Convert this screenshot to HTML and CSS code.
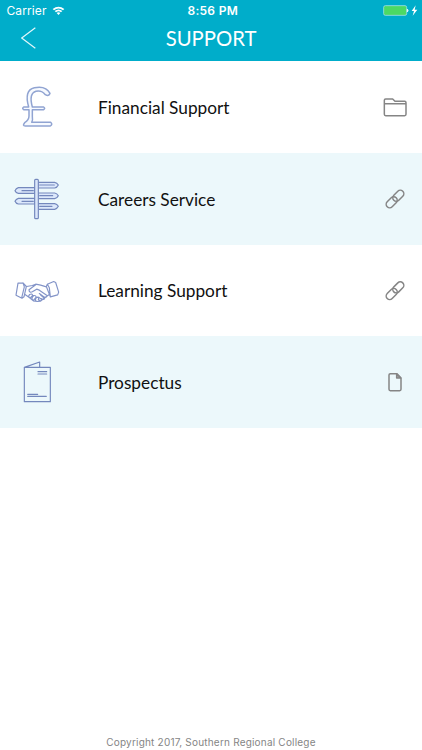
FILE: index.html
```
<!DOCTYPE html>
<html lang="en">
<head>
<meta charset="utf-8">
<title>Support</title>
<link rel="stylesheet" href="styles.css">
</head>
<body>
<header class="header">
  <div class="status">
    <div class="status-left">
      <span class="carrier">Carrier</span>
      <svg class="wifi" viewBox="0 0 39 30"><path d="M2 9Q19.500-5 37 9L33 13Q19.500 2 6 13ZM8 15Q19.500 6 31 15L27 19Q19.500 13 12 19ZM14 21Q19.500 17 25 21L19.500 27Z" fill="#fff"/></svg>
    </div>
    <span class="time">8:56 PM</span>
    <div class="status-right">
      <svg class="battery" viewBox="0 0 105 36"><rect x="2" y="2" width="69" height="29" rx="5" fill="#4cd964" stroke="#9edfe6" stroke-width="2.500"/><path d="M73 12q5 4.500 0 9z" fill="#fff" stroke="#fff" stroke-width="2"/><path d="M98 1L86 18h7l-4 14 14-18h-8z" fill="#fff"/></svg>
    </div>
  </div>
  <div class="nav">
    <svg class="back" viewBox="0 0 45 66"><path d="M43 2L2 33L43 64" fill="none" stroke="#e2f7fb" stroke-width="3.500"/></svg>
    <h1 class="title">SUPPORT</h1>
  </div>
</header>
<main class="list">
  <div class="row">
    <svg class="icon pound" viewBox="0 -3 180 180"><path d="M62 87H47Q41 91 47 95H63V114C63 124 58 129 50 134Q42 144 52 144H127Q135 138 128 133H71Q75 126 73 115V95H107Q113 91 107 87H73C67 65 66 45 84 40C99 37 105 42 112 50Q123 56 126 46C117 28 99 25 79 29C57 34 53 55 62 87Z"/></svg>
    <span class="label">Financial Support</span>
    <svg class="type" viewBox="0 21 120 120"><path d="M28 103V61Q28 57 32 57H53L60 64H89Q93 64 93 68V103Q93 107 89 107H32Q28 107 28 103ZM28 71H93"/></svg>
  </div>
  <div class="row">
    <svg class="icon" viewBox="0 -3 180 180"><g fill="#dce8fb"><path d="M90 37H140Q147 38 151 45Q147 53 140 54H90ZM80 53H31Q24 55 21 62Q24 69 31 70H80ZM90 69H140Q147 70 151 77Q147 85 140 86H90ZM80 85H31Q24 87 21 94Q24 101 31 102H80ZM90 101H140Q147 102 151 109Q147 117 140 118H90Z"/><rect x="80" y="28" width="11" height="118" rx="3"/></g><path d="M95 45H139M42 62H76M95 77H134M42 94H76M95 109H132"/></svg>
    <span class="label">Careers Service</span>
    <svg class="type" viewBox="0 297 120 120"><g transform="translate(60 357) rotate(-45)"><rect x="-33" y="-10.500" width="38" height="21" rx="10.500"/><rect x="-5" y="-10.500" width="38" height="21" rx="10.500"/></g></svg>
  </div>
  <div class="row row-short">
    <svg class="icon hands" viewBox="0 -4.500 180 180"><path d="M30 62L45 61L55 72L48 103L42 107L24 98ZM137 57L143 60L152 89L149 97L127 103L115 72L118 65ZM45 61L49 73L41 106M118 65L124 76L127 103M56 72L73 69L83 65L98 68L115 73M51 96L64 105L76 115L88 117L98 116L111 105L124 96M83 67L63 82Q64 92 73 88L86 80L94 83L117 99Q117 106 109 104L94 93M65 105Q59 102 65 96Q73 92 74 99L66 107M75 113Q68 108 77 99Q85 98 84 105L77 113M85 116Q79 111 87 104Q94 104 91 112M98 98L110 108Q107 114 99 108M92 104L102 112Q99 118 93 112"/></svg>
    <span class="label">Learning Support</span>
    <svg class="type" viewBox="0 3 120 120"><g transform="translate(60 62) rotate(-45)"><rect x="-33" y="-10.500" width="38" height="21" rx="10.500"/><rect x="-5" y="-10.500" width="38" height="21" rx="10.500"/></g></svg>
  </div>
  <div class="row">
    <svg class="icon" viewBox="0 0 180 180"><path d="M49 46H127V149H49ZM49 46L95 30V46M90 59H116M90 66H116M59 127H89M59 133H115"/></svg>
    <span class="label">Prospectus</span>
    <svg class="type" viewBox="0 276 120 120"><path d="M46 311H66L78 324V358Q78 362 74 362H46Q42 362 42 358V315Q42 311 46 311Z"/><path d="M65 312V324H77Z" fill="#aaa"/></svg>
  </div>
</main>
<footer class="footer">Copyright 2017, Southern Regional College</footer>
</body>
</html>
```
FILE: styles.css
```
* { box-sizing: border-box; }
body {
  margin: 0;
  height: 750px;
  display: flex;
  flex-direction: column;
  background: #fff;
  font-family: Lato, sans-serif;
  overflow: hidden;
}
.header {
  height: 61px;
  background: #00adca;
  color: #fff;
}
.status {
  height: 22px;
  display: grid;
  grid-template-columns: 1fr auto 1fr;
  align-items: center;
  padding: 0 4px 0 6.5px;
  font: 12px/22px Inter, sans-serif;
}
.status-left, .status-right { display: flex; align-items: center; }
.status-left { gap: 5px; }
.carrier { letter-spacing: 0.1px; }
.status-right { justify-content: flex-end; }
.wifi { width: 13px; height: 10px; }
.time { font-weight: 600; font-size: 12px; letter-spacing: 0.3px; padding-left: 1px; }
.battery { width: 35px; height: 12px; }
.nav {
  height: 39px;
  display: grid;
  grid-template-columns: 21px 1fr 21px;
}
.back { width: 15px; height: 22px; margin-top: 5px; grid-column: 2; grid-row: 1; }
.title {
  grid-column: 1 / 4;
  grid-row: 1;
  margin: 0;
  text-align: center;
  font-weight: 400;
  font-size: 20.3px;
  line-height: 32px;
}
.row {
  height: 92px;
  display: grid;
  grid-template-columns: 60px 1fr 40px;
  column-gap: 30px;
  align-items: center;
  padding: 0 7px 0 8px;
}
.row-short { height: 91px; }
.row:nth-child(even) { background: #ecf8fb; }
.icon {
  width: 60px;
  height: 60px;
  fill: none;
  stroke: #7488bd;
  stroke-width: 3.5;
  stroke-linejoin: round;
  stroke-linecap: round;
}
.pound { stroke: #91a4d2; stroke-width: 4.5; fill: #f7faff; }
.hands { stroke: #8394c8; }
.label { padding-top: 2px; font-size: 17.25px; line-height: 24px; color: #111; }
.row-short .label { padding-top: 1px; }
.type {
  width: 40px;
  height: 40px;
  fill: none;
  stroke: #858585;
  stroke-width: 4.5;
  stroke-linejoin: round;
}
.footer {
  margin-top: auto;
  height: 16px;
  text-align: center;
  font: 10px/16px Inter, sans-serif;
  letter-spacing: 0.2px;
  color: #858585;
}
```
